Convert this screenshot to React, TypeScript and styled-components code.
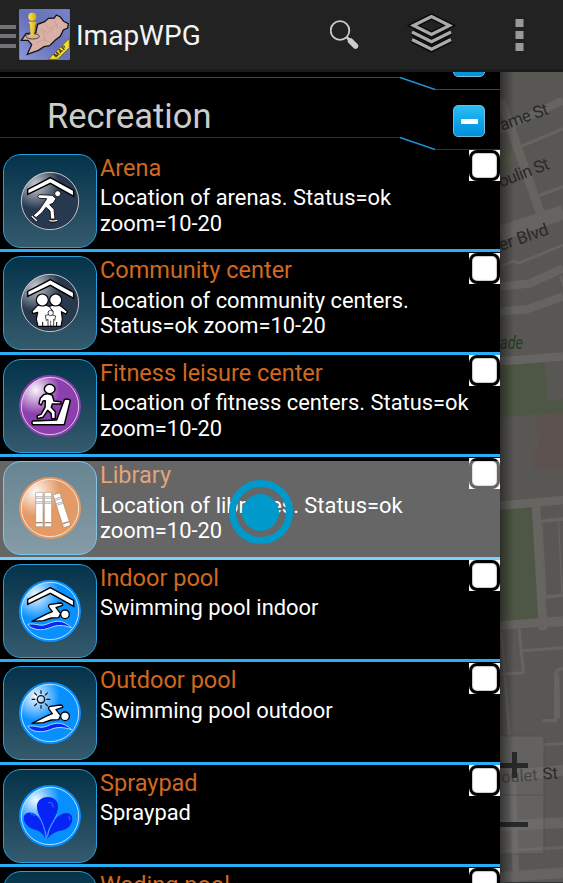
import React from "react";
import styled, { createGlobalStyle } from "styled-components";

const Global = createGlobalStyle`
  * { box-sizing: border-box; }
  body { margin: 0; background: #000; font-family: Roboto, "Liberation Sans", sans-serif; }
  svg { display: block; }
`;

const Screen = styled.div`
  display: flex;
  flex-direction: column;
  width: 563px;
  height: 883px;
  overflow: hidden;
  background: #000;
`;

const ActionBar = styled.header`
  display: flex;
  align-items: center;
  flex: 0 0 72px;
  padding-bottom: 1px;
  background: #222;
  border-bottom: 3px solid #1a1a1a;
`;

const MenuLines = styled.div`
  display: flex;
  flex-direction: column;
  gap: 5.5px;
  width: 16px;
  margin: 4px 3px 0 0;
`;

const MenuLine = styled.span`
  height: 4px;
  background: #737277;
`;

const AppTitle = styled.h1`
  flex: 1;
  margin: 3px 0 0 6px;
  font-size: 28px;
  font-weight: 400;
  line-height: 34px;
  color: #f3f3f3;
`;

const Actions = styled.nav`
  display: flex;
  align-items: center;
  width: 233px;
`;

const ActionButton = styled.button<{ $w: number }>`
  display: flex;
  width: ${(p) => p.$w}px;
  height: 68px;
  padding: 0;
  border: 0;
  background: none;
`;

const Body = styled.main`
  display: flex;
  flex: 1;
  min-height: 0;
`;

const Drawer = styled.aside`
  flex: 0 0 500px;
  overflow: hidden;
  background: #000;
`;

const SectionHead = styled.div<{ $h: number }>`
  display: grid;
  height: ${(p) => p.$h}px;
  > * { grid-area: 1 / 1; }
`;

const SectionTitle = styled.h2`
  margin: 6px 0 0 47px;
  font-size: 34.5px;
  font-weight: 400;
  line-height: 40px;
  color: #ccc;
`;

const Divider = styled.svg`
  align-self: end;
`;

const Toggle = styled.button<{ $lift: number }>`
  display: flex;
  align-items: center;
  justify-content: center;
  justify-self: end;
  width: 32px;
  height: 32px;
  margin: ${(p) => p.$lift}px 15px 0 0;
  padding: 0;
  border: 1px solid #7cb9d9;
  border-radius: 5px;
  background: linear-gradient(#2bbdf3, #0a9fe4 65%, #0091dc);
`;

const ToggleMark = styled.span`
  width: 17px;
  height: 5px;
  border-radius: 1px;
  background: #fff;
`;

const Row = styled.div`
  position: relative;
  display: flex;
  height: 102px;
  margin-bottom: 0.5px;
  padding-left: 3px;
  border-bottom: 3px solid #27aef5;
`;

const Tile = styled.div`
  display: flex;
  align-items: center;
  justify-content: center;
  flex: 0 0 94px;
  height: 94px;
  margin-top: 3.7px;
  border: 1.5px solid #289fdc;
  border-radius: 18px;
  background: linear-gradient(#04334a, #355a6d);
`;

const RowText = styled.div`
  flex: 1;
  min-width: 0;
  padding: 3.7px 0 0 3px;
`;

const RowTitle = styled.h3`
  margin: 0;
  font-size: 23.5px;
  font-weight: 400;
  line-height: 28px;
  color: #d0691f;
`;

const RowNote = styled.p`
  margin: 3.4px 0 0;
  font-size: 21.9px;
  line-height: 25.6px;
  white-space: pre;
  color: #fff;
`;

const CheckFrame = styled.div`
  flex: 0 0 31px;
  height: 31px;
  background: #fff;
`;

const CheckBox = styled.div`
  width: 31px;
  height: 31px;
  border: 3px solid #000;
  border-radius: 8px;
  background: #fff;
  box-shadow: inset 0 0 1px 0.5px #999;
`;

const Highlight = styled.div`
  position: absolute;
  inset: 3.5px 0 -3px;
  background: rgba(255, 255, 255, 0.4);
`;

const TouchMark = styled.div`
  position: absolute;
  left: 228.5px;
  top: 22.8px;
  width: 64px;
  height: 64px;
  border: 7px solid #0099cc;
  border-radius: 50%;
  display: grid;
  place-items: center;
  &::after {
    content: "";
    width: 37px;
    height: 37px;
    border-radius: 50%;
    background: #0099cc;
  }
`;

const MapPane = styled.section`
  flex: 1;
  background: #595754;
`;

const Disc = ({ color, r = 93, children }: { color: string; r?: number; children: React.ReactNode }) => {
  const id = "g" + color.slice(1);
  return (
    <svg width="62" height="62" viewBox="57 65 186 186" strokeLinejoin="round">
      <defs>
        <radialGradient id={id} cx="0.25" cy="0.22" r="0.42">
          <stop offset="0" stopColor="#fff" stopOpacity={r < 93 ? 0.75 : 0.95} />
          <stop offset="1" stopColor="#fff" stopOpacity="0" />
        </radialGradient>
      </defs>
      <circle cx="150" cy="158" r={r} fill={color} />
      <circle cx="150" cy="158" r="86" fill={`url(#${id})`} stroke="#fff" strokeOpacity=".7" strokeWidth="3" />
      {children}
    </svg>
  );
};

const Roof = () => (
  <path d="M151 88L221 126V144L151 105L83 138V123Z" fill="#fff" stroke="#000" strokeWidth="4.5" strokeLinejoin="miter" />
);

const Swimmer = () => (
  <>
    <path d="M96 189L142 166L157 160L147 147Q143 140 151 138L181 134Q189 135 188 141L168 148L182 166L176 178L154 179L130 187Z" fill="#fff" stroke="#000" strokeWidth="4" />
    <circle cx="195" cy="168" r="13" fill="#fff" stroke="#000" strokeWidth="4" />
    <path d="M83 198C110 193 117 207 141 197C170 185 189 184 215 208C192 201 174 198 151 208C124 219 95 215 83 198Z" fill="#0928ef" stroke="#a9ddff" strokeWidth="3" />
  </>
);

const ArenaIcon = () => (
  <Disc color="#28394f" r={88}>
    <Roof />
    <circle cx="173" cy="136" r="9" fill="#fff" stroke="#000" strokeWidth="2.5" />
    <path d="M118 139L157 141L168 151L159 165L149 169L162 183L165 212H152L150 188L138 177L126 193L108 208L100 201L117 186L136 158L140 151L118 150Q109 145 118 139Z" fill="#fff" stroke="#000" strokeWidth="2.5" />
    <path d="M94 203L112 219M147 218Q158 222 173 217" fill="none" stroke="#000" strokeWidth="7" />
    <path d="M95 203L111 218M148 217Q158 220 172 216" fill="none" stroke="#fff" strokeWidth="4" />
  </Disc>
);

const CommunityIcon = () => (
  <Disc color="#29394d" r={88}>
    <Roof />
    <g fill="#fff" stroke="#000" strokeWidth="3.5">
      <path d="M112 166Q127 158 147 168Q174 158 187 170L202 184L198 191L184 184L187 206L183 228H114L109 207L113 186L99 190L96 183Z" />
      <circle cx="127" cy="149" r="18" />
      <circle cx="167" cy="149" r="18" />
    </g>
    <path d="M128 215V227M170 215V227M148 169L160 184" stroke="#000" strokeWidth="3" />
    <path d="M136 195Q152 188 167 197L164 210L161 207V227H144V207L139 211Z" fill="#fff" stroke="#222" strokeWidth="2.5" />
    <circle cx="152" cy="188" r="8" fill="#fff" stroke="#222" strokeWidth="2.5" />
    <path d="M152 211V227" stroke="#222" strokeWidth="2" />
  </Disc>
);

const FitnessIcon = () => (
  <Disc color="#8d3fad">
    <g fill="#fff" stroke="#000" strokeWidth="4.5">
      <path d="M98 203L170 200L193 139Q203 134 211 141L193 214H98Q93 207 98 203Z" />
      <path d="M131 124Q146 117 157 126L162 143L183 145V152L157 152L154 162L166 175V196H155L153 180L143 171L129 192L112 196V187L123 183L135 162L136 142L129 143L124 155L117 151L121 134Z" />
      <ellipse cx="149" cy="107" rx="16" ry="14" />
    </g>
  </Disc>
);

const LibraryIcon = () => (
  <Disc color="#d35700">
    {["translate(107 111)", "translate(133 111)", "translate(159 119) rotate(-18)"].map((t) => (
      <g key={t} transform={t}>
        <rect width="22" height="103" rx="2" fill="#fff" stroke="#4b2505" strokeWidth="1.5" />
        <path d="M0 13H22M0 18H22M0 28H22M0 33H22" stroke="#555" strokeWidth="2" />
        <path d="M1 91H21" stroke="#953600" strokeWidth="4" />
      </g>
    ))}
  </Disc>
);

const IndoorIcon = () => <Disc color="#0891ff"><Roof /><Swimmer /></Disc>;

const OutdoorIcon = () => (
  <Disc color="#0890ff">
    <circle cx="123" cy="117" r="11" fill="none" stroke="#111" strokeWidth="4" />
    <path d="M123 90V101M123 134V145M95 117H106M139 117H151M103 97L111 105M135 129L143 137M103 137L111 129M135 105L143 97" stroke="#111" strokeWidth="3.5" />
    <Swimmer />
  </Disc>
);

const SprayIcon = () => (
  <Disc color="#058fff">
    <g fill="#0624f5">
      <path d="M138 227C135 187 109 155 111 126C113 110 128 101 143 101C167 101 178 118 173 139C167 166 143 189 138 227Z" />
      <path d="M135 227C132 210 117 201 96 196C80 190 69 174 72 159C76 147 93 143 107 154C126 168 136 200 135 227Z" />
      <path d="M142 227C145 200 156 171 176 158C190 148 205 145 215 157C222 177 208 195 188 201C168 204 151 213 142 227Z" />
    </g>
    <path d="M139 226C136 190 118 163 111 142M143 219C145 195 162 174 172 153" stroke="#4da9ff" strokeWidth="3" fill="none" />
    <path d="M145 118Q160 115 159 132M90 151Q98 151 105 158M205 160Q213 161 208 171" stroke="#5283ff" strokeWidth="2.5" fill="none" />
  </Disc>
);

const rows = [
  { title: "Arena", note: "Location of arenas. Status=ok\nzoom=10-20", Icon: ArenaIcon },
  { title: "Community center", note: "Location of community centers.\nStatus=ok zoom=10-20", Icon: CommunityIcon },
  { title: "Fitness leisure center", note: "Location of fitness centers. Status=ok\nzoom=10-20", Icon: FitnessIcon },
  { title: "Library", note: "Location of libraries. Status=ok\nzoom=10-20", Icon: LibraryIcon, pressed: true },
  { title: "Indoor pool", note: "Swimming pool indoor", Icon: IndoorIcon },
  { title: "Outdoor pool", note: "Swimming pool outdoor", Icon: OutdoorIcon },
  { title: "Spraypad", note: "Spraypad", Icon: SprayIcon },
  { title: "Wading pool", note: "", Icon: IndoorIcon },
];

const SectionDivider = ({ color }: { color: string }) => (
  <Divider width="500" height="14" fill="none">
    <path d="M0 1.5H400M435 13.5H500" stroke={color} />
    <path d="M400 1.5L435 13.5" stroke="#1f93d4" strokeWidth="1.5" />
  </Divider>
);

const Logo = () => (
  <svg width="51" height="51" viewBox="57 29 153 153">
    <defs>
      <linearGradient id="sky" x1="0" y1="1" x2="1" y2="0">
        <stop offset="0" stopColor="#8d97dd" />
        <stop offset=".5" stopColor="#6570b6" />
        <stop offset="1" stopColor="#7784cb" />
      </linearGradient>
      <linearGradient id="pin">
        <stop offset="0" stopColor="#ffe94a" />
        <stop offset="1" stopColor="#dba800" />
      </linearGradient>
    </defs>
    <rect x="58" y="30" width="151" height="151" rx="3" fill="url(#sky)" stroke="#8890ae" strokeWidth="2" />
    <path d="M64 123L78 103L107 101L113 75L134 67L145 57L163 56L169 47L181 53L191 66L205 73L203 86L190 92L181 111L166 122L149 139L132 142L115 153L82 165L95 136L84 123Z" fill="#d9b0a5" stroke="#171414" strokeWidth="4" />
    <path d="M108 106L125 92L143 100L160 89M133 75L150 89L174 73M106 131L130 121L151 129M130 97L135 125M164 63L173 86" fill="none" stroke="#bd9396" strokeWidth="1.5" />
    <ellipse cx="98" cy="111" rx="20" ry="8" fill="none" stroke="#4d4638" strokeWidth="3" />
    <path d="M86 67H110L105 77L102 110Q97 115 92 109L90 77Z" fill="url(#pin)" />
    <circle cx="97" cy="52" r="12" fill="url(#pin)" />
    <path d="M145 180L208 117V145L173 180Z" fill="#f4dd2c" stroke="#4b4520" strokeWidth="2" />
    <text transform="translate(168 176) rotate(-44)" fontSize="18" fontWeight="700" letterSpacing="2" fill="#222">MAP</text>
  </svg>
);

const MapDrawing = () => (
  <svg width="63" height="811" viewBox="500 72 63 811" fontFamily="Roboto, sans-serif">
    <defs>
      <linearGradient id="shade">
        <stop offset="0" stopColor="#000" stopOpacity=".45" />
        <stop offset="1" stopColor="#000" stopOpacity="0" />
      </linearGradient>
    </defs>
    <g transform="translate(440 70) scale(.33333)" fill="none" stroke="#666461">
      <path d="M180 240L207 222V231L180 247ZM180 262L216 247L225 271L180 290Z" fill="#565f46" stroke="none" />
      <path d="M183 92L302 432" strokeWidth="27" />
      <path d="M180 180L369 92" strokeWidth="24" />
      <path d="M240 230L369 176M295 377L369 350" strokeWidth="10" />
      <path d="M180 490L369 427" strokeWidth="44" />
      <path d="M180 590L220 573L235 580L369 525" strokeWidth="8" />
      <path d="M180 650L270 640L369 595M180 724L260 718L369 680" strokeWidth="25" />
      <path d="M361 618L372 650" strokeWidth="8" />
    </g>
    <g transform="translate(440 340) scale(.33333)" fill="none" stroke="#676562">
      <path d="M180 75L314 67L323 180L370 178V219L180 232Z" fill="#4e5745" stroke="none" />
      <path d="M289 226L370 220V387L280 390L276 336L296 333Z" fill="#5e5250" stroke="none" />
      <path d="M180 507L274 502L295 836L180 843Z" fill="#4e5745" stroke="none" />
      <path d="M180 64L369 49M180 497L369 480M288 495L309 870" strokeWidth="25" />
      <path d="M180 855L369 848" strokeWidth="22" />
      <path d="M300 544L369 537M312 771L369 766" strokeWidth="10" />
      <path d="M356 547L366 765M306 552L317 765" strokeWidth="4" />
    </g>
    <g transform="translate(440 610) scale(.33333)" fill="none" stroke="#666461">
      <path d="M180 47L369 31M307 0L310 43" strokeWidth="25" />
      <path d="M237 55L250 188L180 193M246 122L369 113M184 65L208 381" strokeWidth="9" />
      <path d="M307 332H347V190Q349 178 369 176M356 325L353 194" strokeWidth="10" />
      <path d="M310 404L369 401M200 722L369 712" strokeWidth="8" />
      <path d="M210 495L369 481M180 648L369 638M180 802L369 788" strokeWidth="32" />
      <path d="M218 500L228 819" strokeWidth="20" />
    </g>
    <rect x="495" y="736" width="49" height="118" rx="2" fill="#777" fillOpacity=".35" stroke="#535250" strokeWidth="1" />
    <g fill="#2a2927" fontSize="17">
      <text transform="translate(502 131) rotate(-20)" textLength="50.500">ame St</text>
      <text transform="translate(501 187.500) rotate(-21)" textLength="53">oulin St</text>
      <text transform="translate(501 251) rotate(-19)" textLength="51.500">er Blvd</text>
      <text x="500" y="348.500" fill="#233c20" fontStyle="italic" fontSize="18" textLength="23" lengthAdjust="spacingAndGlyphs">ade</text>
      <text transform="translate(501.500 783) rotate(-4)" fontSize="16.500" fill="#474643" textLength="36.500">oulet</text>
      <text transform="translate(543 779.500) rotate(-4)" fontSize="16.500">St</text>
    </g>
    <path d="M500 795H544" stroke="#555" />
    <path d="M500 765.500H528M514.500 752V778M500 824.500H528" stroke="#292929" strokeWidth="5" />
    <rect x="500" y="72" width="14" height="811" fill="url(#shade)" />
    <path d="M500 882.500H563" stroke="#333" />
  </svg>
);

export default function App() {
  return (
    <>
      <Global />
      <Screen>
        <ActionBar>
          <MenuLines><MenuLine /><MenuLine /><MenuLine /></MenuLines>
          <Logo />
          <AppTitle>ImapWPG</AppTitle>
          <Actions>
            <ActionButton $w={70} aria-label="Search">
              <svg width="70" height="68" viewBox="330 0 70 68" fill="none" stroke="#ccc">
                <circle cx="340" cy="30.500" r="9.300" strokeWidth="1.800" />
                <path d="M346.500 37L350 40.500" strokeWidth="2.500" />
                <path d="M350.500 41L355.500 46" strokeWidth="5.500" strokeLinecap="round" />
              </svg>
            </ActionButton>
            <ActionButton $w={96} aria-label="Layers">
              <svg width="96" height="68" viewBox="400 0 96 68" fill="none">
                {["#080808", "#aaa"].map((c, i) => (
                  <g key={c} stroke={c} strokeWidth={i ? 3.2 : 6}>
                    <path d="M412 39.500L431.500 49.300L451 39.500M412 32L431.500 41.800L451 32" />
                    <path d="M413.500 25.500L431.500 16.500L449.500 25.500L431.500 34.500Z" />
                  </g>
                ))}
              </svg>
            </ActionButton>
            <ActionButton $w={67} aria-label="More options">
              <svg width="67" height="68" viewBox="496 0 67 68" fill="#999">
                <path d="M515.500 19h8v8h-8zM515.500 31h8v8h-8zM515.500 43h8v8h-8z" />
              </svg>
            </ActionButton>
          </Actions>
        </ActionBar>
        <Body>
          <Drawer>
            <SectionHead $h={18}>
              <Toggle $lift={-27}><ToggleMark /></Toggle>
              <SectionDivider color="#125372" />
            </SectionHead>
            <SectionHead $h={60}>
              <SectionTitle>Recreation</SectionTitle>
              <Toggle $lift={15}><ToggleMark /></Toggle>
              <SectionDivider color="#0c3b53" />
            </SectionHead>
            {rows.map(({ title, note, Icon, pressed }) => (
              <Row key={title}>
                <Tile><Icon /></Tile>
                <RowText>
                  <RowTitle>{title}</RowTitle>
                  <RowNote>{note}</RowNote>
                </RowText>
                <CheckFrame><CheckBox /></CheckFrame>
                {pressed && <><Highlight /><TouchMark /></>}
              </Row>
            ))}
          </Drawer>
          <MapPane><MapDrawing /></MapPane>
        </Body>
      </Screen>
    </>
  );
}
